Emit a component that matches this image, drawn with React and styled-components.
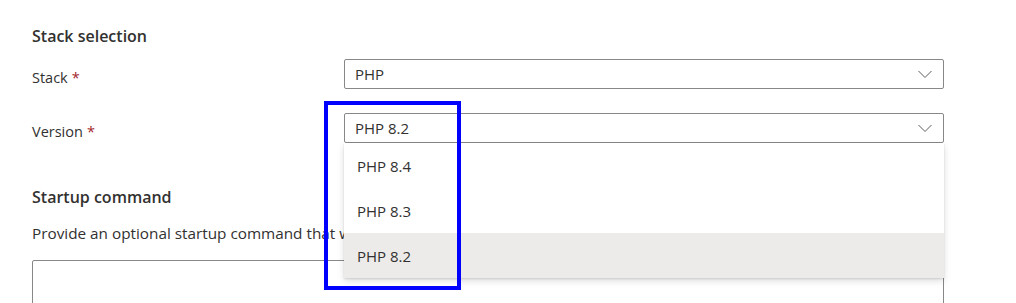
import React from "react";
import styled, { createGlobalStyle } from "styled-components";

const Global = createGlobalStyle`
  html, body { margin: 0; padding: 0; background: #ffffff; }
  body { font-family: "Segoe UI", "Open Sans", "Noto Sans", sans-serif; color: #323130; overflow: hidden; }
  * { box-sizing: border-box; }
`;

const Page = styled.div`
  position: relative;
  width: 1016px;
  height: 303px;
  padding: 25px 72px 0 32px;
`;

const Section = styled.section`
  display: flex;
  flex-direction: column;
  margin-bottom: ${(p) => p.$mb || 0}px;
`;

const Heading = styled.h2`
  margin: 0 0 ${(p) => p.$mb || 0}px;
  font-size: 16px;
  line-height: 22px;
  font-weight: 600;
  color: #323130;
`;

const FieldRow = styled.div`
  display: grid;
  grid-template-columns: 312px 600px;
  align-items: start;
  margin-top: ${(p) => p.$mt || 0}px;
`;

const Label = styled.label`
  font-size: 14.5px;
  line-height: 20px;
  padding-top: 9px;
  color: #323130;
`;

const Req = styled.span`
  color: #a4262c;
  margin-left: 4px;
`;

const DropWrap = styled.div`
  position: relative;
`;

const Dropdown = styled.div`
  height: 30px;
  border: 1px solid #8a8886;
  border-radius: 2px;
  background: #fff;
  display: flex;
  align-items: center;
  justify-content: space-between;
  padding: 0 10px 0 10px;
  font-size: 15px;
  color: #323130;
`;

const Chevron = styled.svg`
  width: 16px;
  height: 16px;
  color: #605e5c;
`;

const Menu = styled.ul`
  position: absolute;
  left: 0;
  right: 0;
  top: 30px;
  margin: 0;
  padding: 0;
  list-style: none;
  background: #fff;
  box-shadow: 0 3.2px 7.2px rgba(0, 0, 0, 0.132), 0 0.6px 1.8px rgba(0, 0, 0, 0.108);
  z-index: 2;
`;

const Option = styled.li`
  height: 45px;
  display: flex;
  align-items: center;
  padding: 0 13px;
  font-size: 15px;
  color: #323130;
  background: ${(p) => (p.$selected ? "#edebe9" : "#fff")};
`;

const Desc = styled.p`
  margin: 0 0 17px;
  font-size: 15.3px;
  line-height: 20px;
  color: #323130;
  white-space: nowrap;
`;

const TextArea = styled.div`
  width: 912px;
  height: 60px;
  border: 1px solid #8a8886;
  border-radius: 2px;
`;

const Annotation = styled.div`
  position: absolute;
  left: 324px;
  top: 101px;
  width: 137px;
  height: 189px;
  border: 4px solid #0000ff;
  z-index: 3;
  pointer-events: none;
`;

const ChevronIcon = () => (
  <Chevron viewBox="0 0 16 16" fill="none">
    <path d="M1.5 5 L8 11.5 L14.5 5" stroke="currentColor" strokeWidth="1" />
  </Chevron>
);

export default function App() {
  return (
    <>
      <Global />
      <Page>
        <Section $mb={43}>
          <Heading $mb={12}>Stack selection</Heading>
          <FieldRow>
            <Label>
              Stack<Req>*</Req>
            </Label>
            <Dropdown>
              <span>PHP</span>
              <ChevronIcon />
            </Dropdown>
          </FieldRow>
          <FieldRow $mt={24}>
            <Label>
              Version<Req>*</Req>
            </Label>
            <DropWrap>
              <Dropdown>
                <span>PHP 8.2</span>
                <ChevronIcon />
              </Dropdown>
              <Menu>
                <Option>PHP 8.4</Option>
                <Option>PHP 8.3</Option>
                <Option $selected>PHP 8.2</Option>
              </Menu>
            </DropWrap>
          </FieldRow>
        </Section>
        <Section>
          <Heading $mb={15}>Startup command</Heading>
          <Desc>Provide an optional startup command that will be run as part of container startup.</Desc>
          <TextArea />
        </Section>
        <Annotation />
      </Page>
    </>
  );
}
